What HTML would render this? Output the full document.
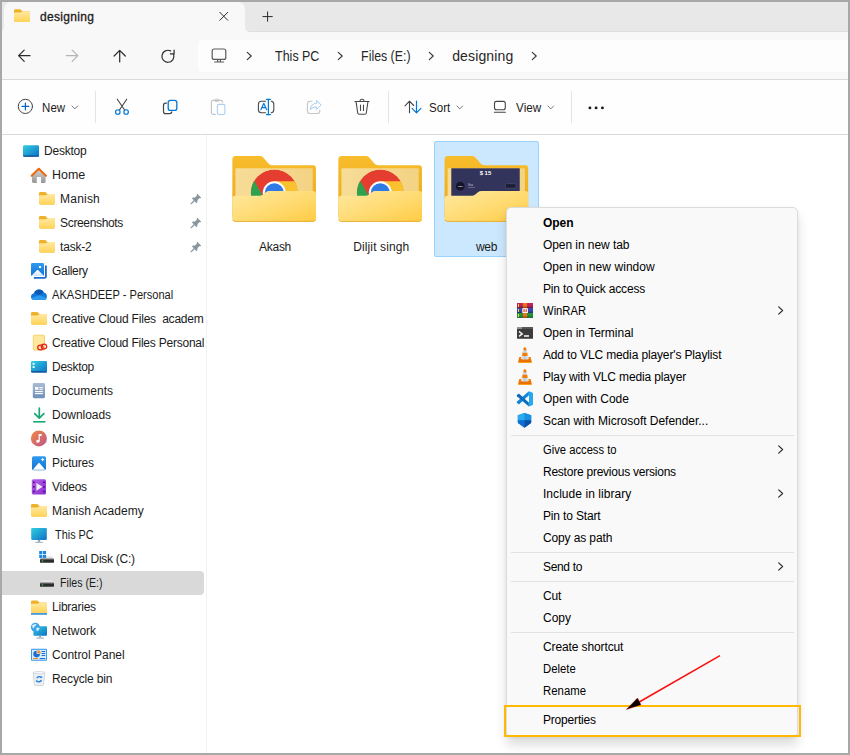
<!DOCTYPE html>
<html><head><meta charset="utf-8"><title>designing</title>
<style>
html,body{margin:0;padding:0;}
body{width:850px;height:755px;position:relative;overflow:hidden;background:#a8a8a8;font-family:"Liberation Sans",sans-serif;}
#win{position:absolute;left:2px;top:2px;width:846px;height:751px;background:#fff;overflow:hidden;}
.abs{position:absolute;}
.t{position:absolute;white-space:nowrap;line-height:16px;}
#tabbar{left:0;top:0;width:850px;height:32px;background:#e8e8e8;}
#tab{left:4px;top:2px;width:241px;height:30px;background:#f8f8f8;border-radius:7px 7px 0 0;}
#nav{left:0;top:32px;width:850px;height:47px;background:#f8f8f8;}
#addr{left:198px;top:40px;width:660px;height:32px;background:#fdfdfd;border-radius:5px 0 0 5px;}
#tool{left:0;top:79px;width:850px;height:56px;background:#fefefe;border-top:1px solid #dadada;border-bottom:1px solid #dadada;box-sizing:border-box;}
.vsep{position:absolute;width:1px;background:#e4e4e4;}
#sel{left:2px;top:571px;width:202px;height:24px;background:#d9d9d9;border-radius:0 4px 4px 0;}
#pick{left:434px;top:141px;width:105px;height:116px;background:#cce8ff;border:1px solid #99d1ff;box-sizing:border-box;border-radius:2px;}
#menu{left:506px;top:207px;width:292px;height:530px;background:#f9f9f9;border:1px solid #dcdcdc;box-sizing:border-box;border-radius:5px;box-shadow:0 8px 12px rgba(0,0,0,.14),0 1px 3px rgba(0,0,0,.06);}
.msep{position:absolute;left:511px;width:283px;height:1px;background:#e2e2e2;}
#hl{left:504px;top:705px;width:297px;height:32px;border:2px solid #ffb900;box-sizing:border-box;}
svg{position:absolute;overflow:visible;}
</style></head><body>
<div id="tabbar" class="abs"></div>
<div class="abs" style="left:0;top:31px;width:850px;height:1px;background:#dedede"></div>
<div id="tab" class="abs"></div>
<div id="nav" class="abs"></div>
<div id="addr" class="abs"></div>
<div id="tool" class="abs"></div>
<div class="abs" style="left:0;top:135px;width:850px;height:620px;background:#fff"></div>
<div class="vsep" style="left:206px;top:135px;height:620px;background:#f2f2f2"></div>
<div class="vsep" style="left:95px;top:91px;height:32px"></div>
<div class="vsep" style="left:388px;top:91px;height:32px"></div>
<div class="vsep" style="left:571px;top:91px;height:32px"></div>
<div id="sel" class="abs"></div>
<div id="pick" class="abs"></div>
<svg width="0" height="0" style="left:0;top:0">
<defs>
<linearGradient id="fgrad" x1="0" y1="0" x2="0" y2="1"><stop offset="0" stop-color="#ffe9a2"/><stop offset="1" stop-color="#ffd357"/></linearGradient>
<linearGradient id="fback" x1="0" y1="0" x2="0" y2="1"><stop offset="0" stop-color="#f7c03c"/><stop offset="1" stop-color="#eaa81c"/></linearGradient>
<g id="sfolder">
<path d="M0 1.6Q0 .2 1.4 .2H5.6Q6.4 .2 7 .8L8.3 2.2H14.6Q16 2.2 16 3.6V11.4Q16 12.8 14.6 12.8H1.4Q0 12.8 0 11.4Z" fill="#eeb12b"/>
<path d="M0 4.6Q0 3.6 1 3.6H6.2Q6.9 3.6 7.4 3.2L8 2.7Q8.5 2.3 9.2 2.3H14.8Q16 2.3 16 3.5V11.5Q16 12.9 14.6 12.9H1.4Q0 12.9 0 11.5Z" fill="url(#fgrad)"/>
</g>
<g id="chevr"><path d="M.3 .3L4.2 4L.3 7.7" fill="none" stroke="#3a3a3a" stroke-width="1.15" stroke-linecap="round" stroke-linejoin="round"/></g>
<g id="chevd"><path d="M0 0L2.8 2.9L5.6 0" fill="none" stroke="#7a7a7a" stroke-width="1" stroke-linecap="round" stroke-linejoin="round"/></g>
</defs></svg>
<!-- tab -->
<svg style="left:13.8px;top:9px" width="16" height="13" viewBox="0 0 16 13"><use href="#sfolder"/></svg>
<svg style="left:0;top:0" width="850" height="140" viewBox="0 0 850 140" fill="none" stroke-linecap="round" stroke-linejoin="round">
<!-- tab curve bottom right -->
<path d="M245 26V32H251Q245 32 245 26Z" fill="#f8f8f8" stroke="none"/>
<path d="M4 26V32H-2Q4 32 4 26Z" fill="#f8f8f8" stroke="none"/>
<g stroke="#2a2a2a" stroke-width="1">
<path d="M219.8 12.3L227.8 20.3M227.8 12.3L219.8 20.3"/>
<path d="M267.6 11.9V21.3M262.9 16.6H272.3"/>
</g>
<!-- nav arrows -->
<g stroke="#2a2a2a" stroke-width="1.2">
<path d="M18.6 55.7H30M24.2 50.1L18.6 55.7L24.2 61.3"/>
<path d="M119.7 50.4V62M114.1 56L119.7 50.4L125.3 56"/>
<path d="M173.7 54.6A6 6 0 1 1 170.6 50.9M170.4 53.9H174.1V50.2"/>
</g>
<g stroke="#b4b4b4" stroke-width="1.2"><path d="M66.4 55.7H77.8M72.2 50.1L77.8 55.7L72.2 61.3"/></g>
<!-- monitor -->
<g stroke="#5a5a5a" stroke-width="1.2"><rect x="212.2" y="49" width="13.6" height="10.4" rx="2"/><path d="M217.6 59.6V61.8M220.4 59.6V61.8M214.6 62H223.6"/></g>
<!-- New -->
<circle cx="25.4" cy="106.4" r="7.1" stroke="#444" stroke-width="1"/>
<path d="M25.4 103V109.8M22 106.4H28.8" stroke="#0067c0" stroke-width="1.2"/>
<!-- cut -->
<g stroke="#444" stroke-width="1.1"><path d="M117.3 99.2L124.8 110.3M126.7 99.2L119.3 110.3"/></g>
<g stroke="#0078d4" stroke-width="1.2"><circle cx="117.8" cy="112" r="2.25"/><circle cx="126.1" cy="112" r="2.25"/></g>
<!-- copy -->
<path d="M166.5 103.1H165.6Q163.5 103.1 163.5 105.2V111.4Q163.5 113.6 165.6 113.6H169.6Q171.7 113.6 171.8 111.9" stroke="#444" stroke-width="1.2"/>
<rect x="168.2" y="100.4" width="8.6" height="10" rx="2.2" stroke="#0078d4" stroke-width="1.3"/>
<!-- paste disabled -->
<path d="M215.3 114.4H213.3Q211.4 114.4 211.4 112.5V102.3Q211.4 100.4 213.3 100.4H220.7Q222.6 100.4 222.6 102.3" stroke="#c2c2c2" stroke-width="1.1"/>
<ellipse cx="217" cy="100.3" rx="2.6" ry="1.25" stroke="#c8c8c8" stroke-width=".9"/>
<rect x="217.4" y="104.4" width="7.5" height="10.1" rx="1.6" stroke="#a9cff2" stroke-width="1.1"/>
<!-- rename -->
<path d="M265.6 101.3H261.4Q258.4 101.3 258.4 104.3V109.8Q258.4 112.8 261.4 112.8H265.6M271.2 101.3Q273.8 101.4 273.8 104.3V109.8Q273.8 112.7 271.2 112.8" stroke="#4a4a4a" stroke-width="1.1"/>
<path d="M268.4 99.3V114.6M266.4 99.3H270.4M266.4 114.6H270.4" stroke="#0078d4" stroke-width="1.2"/>
<path d="M260.9 109.8L263.8 103.2L266.7 109.8M261.9 107.6H265.7" stroke="#0078d4" stroke-width="1.1"/>
<!-- share disabled -->
<path d="M312 101.3H310.2Q307.4 101.3 307.4 104.1V110.7Q307.4 113.5 310.2 113.5H317Q319.8 113.5 319.8 110.7V110" stroke="#c6c6c6" stroke-width="1.1"/>
<path d="M316.6 100.6L321.2 104.9L316.6 109.4V106.9Q312.6 106.7 310.3 109.6Q310.8 103.6 316.6 103.1Z" stroke="#a9cff2" stroke-width="1"/>
<!-- delete -->
<g stroke="#484848" stroke-width="1.1"><path d="M354.9 101.5H369.1M360 101.3Q360 99.3 362 99.3Q364 99.3 364 101.3M356.1 101.8L357.7 113Q357.9 114.3 359.2 114.3H364.8Q366.1 114.3 366.3 113L367.9 101.8M360.5 105V110.4M363.5 105V110.4"/></g>
<!-- sort -->
<path d="M409.5 101.2V112.7M405 105.8L409.5 101.2L413.7 105.5" stroke="#444" stroke-width="1.1"/>
<path d="M416.5 101.2V112.7M412.1 108.4L416.5 112.8L420.9 108.4" stroke="#0078d4" stroke-width="1.2"/>
<!-- view -->
<rect x="494.5" y="101.4" width="10.8" height="8.4" rx="2" stroke="#444" stroke-width="1.1"/><path d="M494.4 112.2H505.4" stroke="#444" stroke-width="1.1"/>
<!-- dots -->
<g fill="#1b1b1b" stroke="none"><circle cx="589.9" cy="107.9" r="1.45"/><circle cx="596.1" cy="107.9" r="1.45"/><circle cx="602.4" cy="107.9" r="1.45"/></g>
</svg>
<!-- chevrons -->
<svg style="left:246.9px;top:52px" width="5" height="8"><use href="#chevr"/></svg>
<svg style="left:337.8px;top:52px" width="5" height="8"><use href="#chevr"/></svg>
<svg style="left:429.2px;top:52px" width="5" height="8"><use href="#chevr"/></svg>
<svg style="left:531.8px;top:52px" width="5" height="8"><use href="#chevr"/></svg>
<svg style="left:72.2px;top:105.7px" width="6" height="4"><use href="#chevd"/></svg>
<svg style="left:457.4px;top:105.7px" width="6" height="4"><use href="#chevd"/></svg>
<svg style="left:548.3px;top:105.7px" width="6" height="4"><use href="#chevd"/></svg>
<svg width="0" height="0" style="left:0;top:0"><defs>
<linearGradient id="dsk" x1="0" y1="0" x2="1" y2="1"><stop offset="0" stop-color="#2fd0e2"/><stop offset="1" stop-color="#0f6fc4"/></linearGradient>
<linearGradient id="mus" x1="0" y1="0" x2="1" y2="1"><stop offset="0" stop-color="#f08a3c"/><stop offset="1" stop-color="#c0528f"/></linearGradient>
<linearGradient id="doc" x1="0" y1="0" x2="0" y2="1"><stop offset="0" stop-color="#a9bdd6"/><stop offset="1" stop-color="#6f8fb8"/></linearGradient>
<linearGradient id="vid" x1="0" y1="0" x2="1" y2="1"><stop offset="0" stop-color="#b660ea"/><stop offset="1" stop-color="#8a2fd0"/></linearGradient>
<linearGradient id="pic" x1="0" y1="0" x2="0" y2="1"><stop offset="0" stop-color="#2f9af0"/><stop offset="1" stop-color="#1572d0"/></linearGradient>
<linearGradient id="homeg" x1="0" y1="0" x2="0" y2="1"><stop offset="0" stop-color="#d2d2d2"/><stop offset="1" stop-color="#979797"/></linearGradient>
<linearGradient id="mtn" x1="0" y1="0" x2="0" y2="1"><stop offset="0" stop-color="#fff"/><stop offset="1" stop-color="#cfe6fb"/></linearGradient>
<g id="pin"><path d="M7 .2L11 4.2Q10.1 5 9.1 4.6L7.2 6.6Q7.7 8.4 6.5 9.6L4.5 7.6L.9 11L.1 10.2L3.6 6.7L1.6 4.7Q2.8 3.5 4.6 4L6.6 2.1Q6.2 1.1 7 .2Z" fill="#89949c"/></g>
<g id="drive"><path d="M2.4 0H11.6L14 2.8H0Z" fill="#e4e4e4"/><rect x="0" y="2.5" width="14" height="4.1" rx=".9" fill="#2c2c2c"/><rect x=".3" y="2.5" width="13.4" height=".8" fill="#8a8a8a"/><rect x="1.7" y="4.2" width="1.5" height="1.1" fill="#3ee04a"/></g>
</defs></svg>
<svg style="left:0;top:0" width="210" height="755" viewBox="0 0 210 755">
<!-- Desktop root -->
<rect x="23" y="145.2" width="16" height="11.4" rx="1.2" fill="url(#dsk)"/><path d="M23 155.5H39V155.6Q39 156.7 37.9 156.7H24.1Q23 156.7 23 155.6Z" fill="#0b468a"/><rect x="34.1" y="155.6" width=".9" height="1.1" fill="#2a8ad8"/><rect x="35.9" y="155.6" width=".9" height="1.1" fill="#2a8ad8"/><rect x="37.7" y="155.6" width="1.3" height="1.1" fill="#2a8ad8"/>
<!-- Home -->
<path d="M32 176.2L38.8 169.8L45.6 176.2V181.6Q45.6 182.9 44.3 182.9H41V177H36.8V182.9H33.3Q32 182.9 32 181.6Z" fill="url(#homeg)"/>
<path d="M31.7 175.7L38.8 168.8L45.9 175.7" fill="none" stroke="#ea6a10" stroke-width="2.1" stroke-linecap="round" stroke-linejoin="round"/>
<!-- quick folders -->
<use href="#sfolder" x="39" y="191.7"/><use href="#sfolder" x="39" y="215.7"/><use href="#sfolder" x="39" y="239.7"/>
<use href="#pin" x="190.2" y="193.6"/><use href="#pin" x="190.2" y="217.6"/><use href="#pin" x="190.2" y="241.6"/>
<!-- Gallery -->
<path d="M33.8 277.9H44.6Q45.9 277.9 45.9 276.6V265.6" fill="none" stroke="#1a6cc8" stroke-width="1.8"/>
<rect x="31" y="263" width="13" height="13" rx="1.3" fill="url(#pic)"/>
<path d="M31.6 275.4L37.2 270.1Q37.6 269.7 38 270.1L43.6 275.4Q43.4 276 42.7 276H32.3Q31.6 276 31.6 275.4Z" fill="url(#mtn)"/>
<rect x="38.9" y="265.9" width="2.2" height="2.2" rx=".4" fill="#fff"/>
<!-- OneDrive -->
<path d="M34.6 300Q31 300 31 296.6Q31 293.8 34 293.2Q35.4 289.6 39.2 289.5Q42.4 289.5 43.8 292.4Q47 292.8 46.9 296.4Q46.8 300 43.6 300Z" fill="#1279d8"/>
<path d="M34 293.2Q35.4 289.6 39.2 289.5Q42.4 289.5 43.8 292.4L39.4 295.3Z" fill="#0a5ab4"/>
<path d="M31.3 298L39.4 295.3L46.6 298Q45.9 300 43.6 300H34.6Q32 300 31.3 298Z" fill="#2b9bee"/>
<!-- CC folder -->
<use href="#sfolder" x="31" y="311.8"/>
<!-- CC files personal -->
<rect x="33.3" y="335.2" width="11.2" height="14.8" rx=".8" fill="#ffe79c" stroke="#f0c95a" stroke-width=".8"/>
<g fill="none" stroke="#e2231a" stroke-width="1.25"><ellipse cx="40.4" cy="347.4" rx="2.7" ry="2.4"/><ellipse cx="44" cy="346.6" rx="2.7" ry="2.4"/></g>
<!-- Desktop -->
<rect x="31" y="361" width="16" height="11.4" rx="1.2" fill="url(#dsk)"/><path d="M31 371.3H47V371.4Q47 372.5 45.9 372.5H32.1Q31 372.5 31 371.4Z" fill="#0b468a"/><rect x="32.6" y="362.8" width="2" height="2" fill="#eef9ff"/><rect x="32.6" y="366" width="2" height="2" fill="#eef9ff"/><rect x="42.1" y="371.4" width=".9" height="1.1" fill="#2a8ad8"/><rect x="43.9" y="371.4" width=".9" height="1.1" fill="#2a8ad8"/><rect x="45.7" y="371.4" width="1.3" height="1.1" fill="#2a8ad8"/>
<!-- Documents -->
<rect x="32.8" y="383" width="12.2" height="15.2" rx="1.4" fill="url(#doc)"/>
<g fill="#fff"><rect x="35" y="387" width="3.4" height="2.8"/><rect x="39.4" y="387" width="3.4" height="1.1"/><rect x="39.4" y="388.8" width="3.4" height="1"/><rect x="35" y="391" width="7.8" height="1.1"/><rect x="35" y="393" width="7.8" height="1.1"/></g>
<!-- Downloads -->
<g fill="none" stroke="#17a873" stroke-width="1.7" stroke-linecap="round" stroke-linejoin="round"><path d="M39.3 408V418M34.7 413.6L39.3 418.2L43.9 413.6"/></g><rect x="33.2" y="421" width="12.2" height="1.6" fill="#17a873"/>
<!-- Music -->
<circle cx="38.9" cy="438.4" r="8" fill="url(#mus)"/>
<path d="M38.6 434H41.6V436H39.8V441Q39.8 442.8 37.9 442.8Q36.2 442.8 36.2 441.3Q36.2 439.8 37.9 439.8Q38.3 439.8 38.6 440Z" fill="#fff"/>
<!-- Pictures -->
<rect x="32" y="456.2" width="14" height="14" rx="1.6" fill="url(#pic)"/>
<path d="M33.2 469.2L38.6 463Q39 462.6 39.4 463L44.8 469.2Q45 469.7 44.4 469.7H33.6Q33 469.7 33.2 469.2Z" fill="#fff"/>
<path d="M42.7 457.6L43.3 459L44.7 459.6L43.3 460.2L42.7 461.6L42.1 460.2L40.7 459.6L42.1 459Z" fill="#fff"/>
<!-- Videos -->
<rect x="31.8" y="479.2" width="14.2" height="15.2" rx="1.5" fill="url(#vid)"/>
<g fill="#4a167a"><rect x="33" y="481.4" width="1.7" height="1.7"/><rect x="33" y="486" width="1.7" height="1.7"/><rect x="33" y="490.6" width="1.7" height="1.7"/><rect x="43.1" y="481.4" width="1.7" height="1.7"/><rect x="43.1" y="486" width="1.7" height="1.7"/><rect x="43.1" y="490.6" width="1.7" height="1.7"/></g>
<path d="M36.4 482.9L42.6 486.8L36.4 490.7Z" fill="#f6ecff"/>
<!-- Manish Academy -->
<use href="#sfolder" x="31" y="503.8"/>
<!-- This PC -->
<rect x="31.2" y="528" width="15.6" height="12" rx="1.3" fill="url(#dsk)"/><rect x="37.9" y="540" width="2.2" height="2" fill="#9aa7b4"/><rect x="35.2" y="541.8" width="7.6" height="1.2" rx=".5" fill="#aeb9c4"/>
<!-- Local disk -->
<use href="#drive" x="40" y="556.2"/>
<g fill="#1a86e0"><rect x="39.2" y="551" width="3.1" height="3.1"/><rect x="43" y="551" width="3.1" height="3.1"/><rect x="39.2" y="554.8" width="3.1" height="3.1"/><rect x="43" y="554.8" width="3.1" height="3.1"/></g>
<!-- Files E -->
<use href="#drive" x="40" y="580.2"/>
<!-- Libraries -->
<use href="#sfolder" x="31" y="600.2"/><rect x="31" y="613.2" width="16" height="1.5" fill="#1a86e0"/>
<!-- Network -->
<rect x="33.4" y="626.2" width="13.6" height="9.6" rx="1" fill="url(#dsk)"/><rect x="39" y="635.8" width="2.2" height="2" fill="#9aa7b4"/><rect x="36.2" y="637.6" width="7.8" height="1.1" rx=".4" fill="#aeb9c4"/>
<circle cx="35.4" cy="627.3" r="4.5" fill="#3ba3e6"/><path d="M32 625.6Q34 623.4 36.6 624.2Q36 626 34.4 626.4Q34.6 628 33.2 628.2Q32 627.4 32 625.6ZM36.2 628Q38 626.8 39.6 628.4Q38.6 630.8 36.8 631.2Q36.6 629.6 36.2 628Z" fill="#d6eefc"/>
<!-- Control panel -->
<rect x="31" y="648.8" width="16" height="12" rx=".8" fill="#3a9bec"/><rect x="32" y="649.8" width="14" height="10" fill="#d6ebfc"/>
<path d="M36.6 650.8A3.3 3.3 0 1 0 39.9 654.1H36.6Z" fill="#1a6fd0"/><path d="M37.4 650.2A3.3 3.3 0 0 1 40.7 653.4H37.4Z" fill="#f08a24"/>
<g fill="#1a6fd0"><rect x="41.6" y="651" width="3.6" height="1"/><rect x="41.6" y="653" width="3.6" height="1"/><rect x="41.6" y="655" width="3.6" height="1"/><rect x="39.6" y="658" width="5.6" height="1.1"/></g><rect x="33" y="658" width="5" height="1.1" fill="#f08a24"/>
<!-- Recycle bin -->
<path d="M33.2 672.6H44.8L43.6 684.6Q43.5 685.6 42.5 685.6H35.5Q34.5 685.6 34.4 684.6Z" fill="#eceff2" stroke="#c4cad0" stroke-width=".7"/><ellipse cx="39" cy="672.6" rx="5.8" ry="1.1" fill="#f8f9fa" stroke="#c4cad0" stroke-width=".6"/>
<g fill="none" stroke="#1e7fe0" stroke-width="1.3"><path d="M36.8 678.2A2.5 2.5 0 0 1 41.2 677.6"/><path d="M41.4 680A2.5 2.5 0 0 1 37 680.8"/></g><path d="M40.4 676.4L42.4 676.6L41.8 678.6Z" fill="#1e7fe0"/><path d="M37.8 682L35.8 681.8L36.4 679.8Z" fill="#1e7fe0"/>
</svg>
<svg style="left:0;top:0" width="850" height="300" viewBox="0 0 850 300">
<defs>
<linearGradient id="bfback" x1="0" y1="0" x2="0" y2="1"><stop offset="0" stop-color="#f8bd2c"/><stop offset="1" stop-color="#e9a71a"/></linearGradient>
<linearGradient id="bffront" x1="0" y1="0" x2="1" y2="1"><stop offset="0" stop-color="#ffe8a0"/><stop offset=".6" stop-color="#ffd96c"/><stop offset="1" stop-color="#ffcb42"/></linearGradient>
<linearGradient id="bfpaper" x1="0" y1="0" x2="1" y2="0"><stop offset="0" stop-color="#f7dc98"/><stop offset="1" stop-color="#f3d384"/></linearGradient>
<clipPath id="chclip"><circle cx="42.3" cy="37.1" r="23.6"/></clipPath>
<g id="bfb"><path d="M0 3.4Q0 0 3.4 0H27.8Q29.6 0 30.9 1.3L36.6 7.9Q37.9 9.4 39.9 9.4H81.3Q84.3 9.4 84.3 12.4V62H0Z" fill="url(#bfback)"/><rect x="3.1" y="12.4" width="77.9" height="30" rx="1.2" fill="url(#bfpaper)"/></g>
<g id="bff"><path d="M0 43Q0 40 3 40H27.4Q29.4 40 30.9 38.8L33.7 36.6Q35.2 35.4 37.2 35.4H81.3Q84.3 35.4 84.3 38.4V62.8Q84.3 66.3 80.8 66.3H3.5Q0 66.3 0 62.8Z" fill="url(#bffront)"/><path d="M.3 64.2Q1 66 3 66H81.3Q83.3 66 84 64.2" fill="none" stroke="#e4ac2e" stroke-width=".9"/></g>
<g id="chrome" clip-path="url(#chclip)"><circle cx="42.3" cy="37.1" r="23.6" fill="#e53e30"/><path d="M32.3 42.9L12.3 8.3H-4V80H32.3Z" fill="#2ea04e"/><path d="M42.3 25.5H80V80H42.3Z" fill="#f9c22e"/><circle cx="42.3" cy="37.1" r="11.6" fill="#fff"/><circle cx="42.3" cy="37.1" r="9.6" fill="#2f7ae5"/></g>
</defs>
<g transform="translate(232.35 156) scale(.992 .991)"><use href="#bfb"/><use href="#chrome"/><use href="#bff"/></g>
<g transform="translate(338.35 156) scale(.992 .991)"><use href="#bfb"/><use href="#chrome"/><use href="#bff"/></g>
<g transform="translate(444.55 156) scale(.992 .991)"><use href="#bfb"/>
<rect x="6.8" y="12.4" width="69" height="28" fill="#33345c"/>
<circle cx="15.8" cy="30.4" r="4.4" fill="#15162c"/>
<rect x="61.4" y="28" width="10.6" height="4.4" rx=".8" fill="#1b1c36" stroke="#5a5b80" stroke-width=".5"/>
<text x="35.4" y="19.6" font-family="Liberation Sans, sans-serif" font-size="6" font-weight="700" fill="#fff">$ 15</text>
<text x="13.6" y="31.2" font-family="Liberation Sans, sans-serif" font-size="2.2" font-weight="700" fill="#fff">VISA</text>
<text x="23.6" y="30" font-family="Liberation Sans, sans-serif" font-size="2.6" fill="#d8d8e8">Visa</text>
<rect x="23.6" y="31.4" width="7" height=".9" fill="#6a6b90"/>
<use href="#bff"/></g>
</svg>

<div id="menu" class="abs"></div>
<div class="msep" style="top:435px"></div>
<div class="msep" style="top:552px"></div>
<div class="msep" style="top:581px"></div>
<div class="msep" style="top:632px"></div>
<svg style="left:0;top:0" width="850" height="755" viewBox="0 0 850 755">
<defs>
<linearGradient id="wrs" x1="0" y1="0" x2="0" y2="1"><stop offset="0" stop-color="#000" stop-opacity="0"/><stop offset=".6" stop-color="#000" stop-opacity=".05"/><stop offset="1" stop-color="#000" stop-opacity=".42"/></linearGradient>
<linearGradient id="vlcb" x1="0" y1="0" x2="0" y2="1"><stop offset="0" stop-color="#f28410"/><stop offset=".78" stop-color="#e96e00"/><stop offset=".9" stop-color="#f89a18"/><stop offset="1" stop-color="#ffc030"/></linearGradient>
<linearGradient id="vlco" x1="0" y1="0" x2="1" y2="0"><stop offset="0" stop-color="#f79a28"/><stop offset=".5" stop-color="#ee7400"/><stop offset="1" stop-color="#f79a28"/></linearGradient>
<linearGradient id="vlcw" x1="0" y1="0" x2="1" y2="0"><stop offset="0" stop-color="#eef2f5"/><stop offset=".5" stop-color="#b9c7d2"/><stop offset="1" stop-color="#eef2f5"/></linearGradient>
<g id="vlc">
<path d="M1.2 10H12.6L13.9 15.6Q14 16 13.6 16H.4Q0 16 .1 15.6Z" fill="url(#vlcb)"/>
<path d="M6.9 .2Q5.9 .2 5.7 1L3.1 11.6Q3 12.6 6.9 12.6Q10.8 12.6 10.7 11.6L8.1 1Q7.9 .2 6.9 .2Z" fill="url(#vlco)"/>
<path d="M5.2 2.9L4.5 5.6Q6.9 6.4 9.3 5.6L8.6 2.9Q6.9 3.5 5.2 2.9Z" fill="url(#vlcw)"/>
<path d="M3.8 8.6L3.1 11.6Q3.2 12.6 6.9 12.6Q10.6 12.6 10.7 11.6L10 8.6Q6.9 9.6 3.8 8.6Z" fill="url(#vlcw)"/>
</g>
<g id="mchev"><path d="M.4 .4L4.3 4L.4 7.6" fill="none" stroke="#2a2a2a" stroke-width="1.2" stroke-linecap="round" stroke-linejoin="round"/></g>
</defs>
<!-- WinRAR -->
<rect x="517" y="303" width="16" height="5" fill="#c4235a"/><rect x="517" y="307.9" width="16" height="5.1" fill="#3c49b6"/><rect x="517" y="312.9" width="16" height="5" fill="#1f983c"/>
<rect x="522.9" y="303" width="4.2" height="15" fill="#f0761a"/>
<rect x="517" y="303" width="16" height="5" fill="url(#wrs)"/><rect x="517" y="307.9" width="16" height="5.1" fill="url(#wrs)"/><rect x="517" y="312.9" width="16" height="5" fill="url(#wrs)"/>
<rect x="522.3" y="308.2" width="5.6" height="4.8" rx=".6" fill="#fff"/><path d="M523.4 309.2H524.6V312.2Q523.9 312.2 523.4 311.6ZM525.6 309.2H526.8V311.6Q526.3 312.2 525.6 312.2Z" fill="#e02a10"/>
<g fill="#ffd428"><rect x="518" y="304" width="1" height="3"/><rect x="518" y="309" width="1" height="3"/><rect x="518" y="314" width="1" height="3"/></g>
<!-- Terminal -->
<rect x="517" y="327.1" width="16" height="11.7" rx=".6" fill="#3b3b3b"/><rect x="517" y="327.1" width="16" height="1.7" fill="#5c5c5c"/><rect x="517" y="327.1" width="5" height="1.7" fill="#a0a0a0"/>
<path d="M519 331.4L522.2 333.9L519 336.4" fill="none" stroke="#f2f2f2" stroke-width="1.5"/><rect x="524" y="335.2" width="5" height="1.6" fill="#f2f2f2"/>
<!-- VLC -->
<use href="#vlc" x="518" y="347"/><use href="#vlc" x="518" y="369"/>
<!-- VS Code -->
<path d="M528.9 391.2L532.2 392.6Q533 393 533 393.9V403.9Q533 404.8 532.2 405.2L528.9 406.6Z" fill="#25a8f0"/>
<path d="M528.9 391.2V395.4L519.4 403.9Q518.8 404.4 518.2 403.9L516.9 402.7Q516.4 402.1 517 401.5Z" fill="#1186d8"/>
<path d="M528.9 406.6V402.4L519.4 393.9Q518.8 393.4 518.2 393.9L516.9 395.1Q516.4 395.7 517 396.3Z" fill="#0a6cba"/>
<path d="M528.9 395.6V402.2L525.1 398.9Z" fill="#f9f9f9"/>
<!-- Defender -->
<path d="M524.5 413L531.2 415.3V422Q531.2 422.8 530.6 423.3L524.5 427.8L518.4 423.3Q517.8 422.8 517.8 422V415.3Z" fill="#1180dc"/>
<path d="M524.5 413L531.2 415.3V420.3H524.5Z" fill="#1590e2"/><path d="M524.5 413L517.8 415.3V420.3H524.5Z" fill="#2caaee"/>
<path d="M517.8 420.3H524.5V427.8L518.4 423.3Q517.8 422.8 517.8 422Z" fill="#0b70d2"/><path d="M531.2 420.3H524.5V427.8L530.6 423.3Q531.2 422.8 531.2 422Z" fill="#0a4ea6"/>
<!-- chevrons -->
<use href="#mchev" x="778.3" y="306.5"/><use href="#mchev" x="778.3" y="445.5"/><use href="#mchev" x="778.3" y="489.5"/><use href="#mchev" x="778.3" y="562.5"/>
</svg>

<span class="t" style="left:39.88px;top:9.14px;font-size:12px;font-weight:400;color:#1b1b1b;letter-spacing:0.327px;-webkit-text-stroke:.3px #1b1b1b;">designing</span>
<span class="t" style="left:275.36px;top:48.25px;font-size:14px;font-weight:400;color:#262626;letter-spacing:0.000px;transform:scaleX(0.8887);transform-origin:0.84px 0;">This PC</span>
<span class="t" style="left:360.86px;top:48.25px;font-size:14px;font-weight:400;color:#262626;letter-spacing:0.000px;transform:scaleX(0.8826);transform-origin:0.84px 0;">Files (E:)</span>
<span class="t" style="left:452.16px;top:48.25px;font-size:14px;font-weight:400;color:#262626;letter-spacing:0.149px;">designing</span>
<span class="t" style="left:41.92px;top:99.60px;font-size:13px;font-weight:400;color:#1b1b1b;letter-spacing:0.000px;transform:scaleX(0.8824);transform-origin:0.78px 0;">New</span>
<span class="t" style="left:428.72px;top:99.60px;font-size:13px;font-weight:400;color:#1b1b1b;letter-spacing:0.000px;transform:scaleX(0.8870);transform-origin:0.78px 0;">Sort</span>
<span class="t" style="left:515.52px;top:99.60px;font-size:13px;font-weight:400;color:#1b1b1b;letter-spacing:0.000px;transform:scaleX(0.8965);transform-origin:0.78px 0;">View</span>
<span class="t" style="left:44.08px;top:143.24px;font-size:12px;font-weight:400;color:#1b1b1b;letter-spacing:-0.255px;">Desktop</span>
<span class="t" style="left:52.08px;top:167.24px;font-size:12px;font-weight:400;color:#1b1b1b;letter-spacing:0.000px;transform:scaleX(1.0375);transform-origin:0.72px 0;">Home</span>
<span class="t" style="left:60.08px;top:191.24px;font-size:12px;font-weight:400;color:#1b1b1b;letter-spacing:0.202px;">Manish</span>
<span class="t" style="left:60.08px;top:215.24px;font-size:12px;font-weight:400;color:#1b1b1b;letter-spacing:-0.348px;">Screenshots</span>
<span class="t" style="left:60.08px;top:239.24px;font-size:12px;font-weight:400;color:#1b1b1b;letter-spacing:-0.197px;">task-2</span>
<span class="t" style="left:52.08px;top:263.24px;font-size:12px;font-weight:400;color:#1b1b1b;letter-spacing:-0.332px;">Gallery</span>
<span class="t" style="left:52.08px;top:287.24px;font-size:12px;font-weight:400;color:#1b1b1b;letter-spacing:0.000px;transform:scaleX(0.9239);transform-origin:0.72px 0;">AKASHDEEP - Personal</span>
<span class="t" style="left:52.08px;top:311.24px;font-size:12px;font-weight:400;color:#1b1b1b;letter-spacing:-0.211px;">Creative Cloud Files  academ</span>
<span class="t" style="left:52.08px;top:335.24px;font-size:12px;font-weight:400;color:#1b1b1b;letter-spacing:-0.227px;">Creative Cloud Files Personal</span>
<span class="t" style="left:52.08px;top:359.24px;font-size:12px;font-weight:400;color:#1b1b1b;letter-spacing:-0.305px;">Desktop</span>
<span class="t" style="left:52.08px;top:383.24px;font-size:12px;font-weight:400;color:#1b1b1b;letter-spacing:0.041px;">Documents</span>
<span class="t" style="left:52.08px;top:407.24px;font-size:12px;font-weight:400;color:#1b1b1b;letter-spacing:-0.043px;">Downloads</span>
<span class="t" style="left:52.08px;top:431.24px;font-size:12px;font-weight:400;color:#1b1b1b;letter-spacing:0.121px;">Music</span>
<span class="t" style="left:52.08px;top:455.24px;font-size:12px;font-weight:400;color:#1b1b1b;letter-spacing:-0.190px;">Pictures</span>
<span class="t" style="left:52.08px;top:479.24px;font-size:12px;font-weight:400;color:#1b1b1b;letter-spacing:-0.291px;">Videos</span>
<span class="t" style="left:52.08px;top:503.24px;font-size:12px;font-weight:400;color:#1b1b1b;letter-spacing:0.014px;">Manish Academy</span>
<span class="t" style="left:55.08px;top:527.24px;font-size:12px;font-weight:400;color:#1b1b1b;letter-spacing:0.000px;transform:scaleX(0.9057);transform-origin:0.72px 0;">This PC</span>
<span class="t" style="left:60.08px;top:551.24px;font-size:12px;font-weight:400;color:#1b1b1b;letter-spacing:-0.269px;">Local Disk (C:)</span>
<span class="t" style="left:60.08px;top:575.24px;font-size:12px;font-weight:400;color:#1b1b1b;letter-spacing:0.000px;transform:scaleX(0.8840);transform-origin:0.72px 0;">Files (E:)</span>
<span class="t" style="left:52.08px;top:599.24px;font-size:12px;font-weight:400;color:#1b1b1b;letter-spacing:-0.250px;">Libraries</span>
<span class="t" style="left:52.08px;top:623.24px;font-size:12px;font-weight:400;color:#1b1b1b;letter-spacing:0.002px;">Network</span>
<span class="t" style="left:52.08px;top:647.24px;font-size:12px;font-weight:400;color:#1b1b1b;letter-spacing:-0.010px;">Control Panel</span>
<span class="t" style="left:52.08px;top:671.24px;font-size:12px;font-weight:400;color:#1b1b1b;letter-spacing:-0.163px;">Recycle bin</span>
<span class="t" style="left:259.08px;top:239.14px;font-size:12px;font-weight:400;color:#1b1b1b;letter-spacing:-0.289px;">Akash</span>
<span class="t" style="left:353.18px;top:239.14px;font-size:12px;font-weight:400;color:#1b1b1b;letter-spacing:0.128px;">Diljit singh</span>
<span class="t" style="left:475.88px;top:239.14px;font-size:12px;font-weight:400;color:#1b1b1b;letter-spacing:-0.260px;">web</span>
<span class="t" style="left:542.98px;top:214.84px;font-size:12px;font-weight:700;color:#000;letter-spacing:-0.006px;">Open</span>
<span class="t" style="left:542.98px;top:236.84px;font-size:12px;font-weight:400;color:#000;letter-spacing:-0.064px;">Open in new tab</span>
<span class="t" style="left:542.98px;top:258.84px;font-size:12px;font-weight:400;color:#000;letter-spacing:0.062px;">Open in new window</span>
<span class="t" style="left:542.98px;top:280.84px;font-size:12px;font-weight:400;color:#000;letter-spacing:-0.170px;">Pin to Quick access</span>
<span class="t" style="left:542.98px;top:302.84px;font-size:12px;font-weight:400;color:#000;letter-spacing:0.000px;transform:scaleX(0.9339);transform-origin:0.72px 0;">WinRAR</span>
<span class="t" style="left:542.98px;top:324.84px;font-size:12px;font-weight:400;color:#000;letter-spacing:0.005px;">Open in Terminal</span>
<span class="t" style="left:542.98px;top:346.84px;font-size:12px;font-weight:400;color:#000;letter-spacing:-0.136px;">Add to VLC media player's Playlist</span>
<span class="t" style="left:542.98px;top:368.84px;font-size:12px;font-weight:400;color:#000;letter-spacing:-0.141px;">Play with VLC media player</span>
<span class="t" style="left:542.98px;top:390.84px;font-size:12px;font-weight:400;color:#000;letter-spacing:-0.004px;">Open with Code</span>
<span class="t" style="left:542.98px;top:412.84px;font-size:12px;font-weight:400;color:#000;letter-spacing:-0.027px;">Scan with Microsoft Defender...</span>
<span class="t" style="left:542.98px;top:441.84px;font-size:12px;font-weight:400;color:#000;letter-spacing:0.000px;transform:scaleX(0.9335);transform-origin:0.72px 0;">Give access to</span>
<span class="t" style="left:542.98px;top:463.84px;font-size:12px;font-weight:400;color:#000;letter-spacing:-0.234px;">Restore previous versions</span>
<span class="t" style="left:542.98px;top:485.84px;font-size:12px;font-weight:400;color:#000;letter-spacing:0.056px;">Include in library</span>
<span class="t" style="left:542.98px;top:507.84px;font-size:12px;font-weight:400;color:#000;letter-spacing:-0.155px;">Pin to Start</span>
<span class="t" style="left:542.98px;top:529.84px;font-size:12px;font-weight:400;color:#000;letter-spacing:-0.120px;">Copy as path</span>
<span class="t" style="left:542.98px;top:558.84px;font-size:12px;font-weight:400;color:#000;letter-spacing:-0.329px;">Send to</span>
<span class="t" style="left:542.98px;top:587.84px;font-size:12px;font-weight:400;color:#000;letter-spacing:-0.160px;">Cut</span>
<span class="t" style="left:542.98px;top:609.84px;font-size:12px;font-weight:400;color:#000;letter-spacing:0.002px;">Copy</span>
<span class="t" style="left:542.98px;top:638.84px;font-size:12px;font-weight:400;color:#000;letter-spacing:-0.113px;">Create shortcut</span>
<span class="t" style="left:542.98px;top:660.84px;font-size:12px;font-weight:400;color:#000;letter-spacing:0.000px;transform:scaleX(0.9419);transform-origin:0.72px 0;">Delete</span>
<span class="t" style="left:542.98px;top:682.84px;font-size:12px;font-weight:400;color:#000;letter-spacing:0.000px;transform:scaleX(0.9474);transform-origin:0.72px 0;">Rename</span>
<span class="t" style="left:542.98px;top:711.84px;font-size:12px;font-weight:400;color:#000;letter-spacing:-0.175px;">Properties</span>
<div id="hl" class="abs"></div>
<svg style="left:0;top:0" width="850" height="755" viewBox="0 0 850 755"><line x1="720" y1="655.7" x2="634" y2="705" stroke="#fb0d0d" stroke-width="1.5"/><path d="M626.3 709.5 L637.5 698 L641 704.8Z" fill="#050000" stroke="#c00" stroke-width=".4"/></svg>
<!-- window border -->
<div class="abs" style="left:0;top:0;width:850px;height:2px;background:#a8a8a8"></div>
<div class="abs" style="left:0;top:753px;width:850px;height:2px;background:#a8a8a8"></div>
<div class="abs" style="left:0;top:0;width:2px;height:755px;background:#a8a8a8"></div>
<div class="abs" style="left:848px;top:0;width:2px;height:755px;background:#a8a8a8"></div>
</body></html>
